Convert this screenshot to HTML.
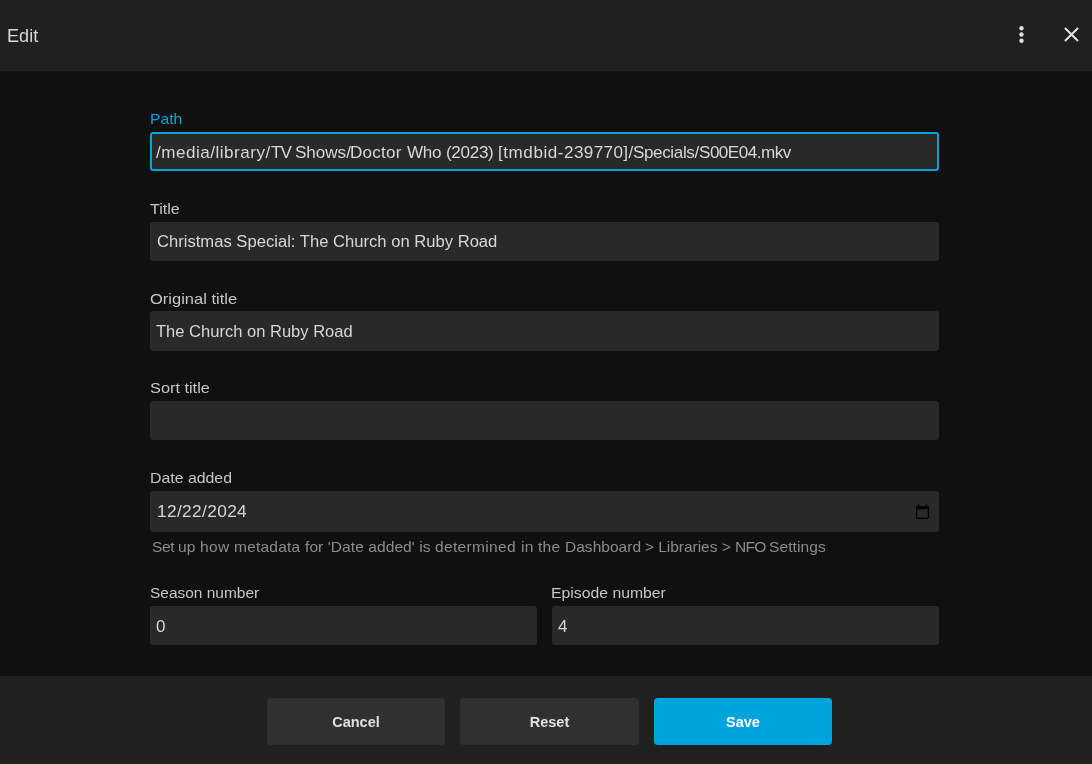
<!DOCTYPE html>
<html><head><meta charset="utf-8">
<style>
*{box-sizing:border-box;margin:0;padding:0}
html,body{width:1092px;height:764px;overflow:hidden;background:#101010;font-family:"Liberation Sans",sans-serif;color:#d6d6d6}
.hdr{position:absolute;left:0;top:0;width:1092px;height:71px;background:#202020}
.t{position:absolute;white-space:pre;line-height:20px;will-change:transform}
.edit{left:7px;top:26px;font-size:18.1px;color:#d8d8d8}
.lbl{font-size:16px;color:#c6c6c6}
.val{font-size:17px;color:#d6d6d6}
.box{position:absolute;background:#292929;border-radius:3px}
.focus{border:2px solid #00a4dc}
.help{font-size:15.7px;color:#8c8c8c}
.ftr{position:absolute;left:0;top:676px;width:1092px;height:88px;background:#202020}
.btn{position:absolute;will-change:transform;top:698px;height:47px;width:178px;border-radius:4px;background:#303030;color:#e0e0e0;font-weight:bold;font-size:14.5px;text-align:center;line-height:47px;padding-top:1px}
.save{background:#00a4dc;color:#fff}
svg{position:absolute}
</style></head><body>
<div class="hdr"></div>
<div class="t edit">Edit</div>
<svg style="left:1009px;top:22px" width="25" height="25" viewBox="0 0 24 24"><circle cx="12" cy="6" r="2.1" fill="#e0e0e0"/><circle cx="12" cy="12" r="2.1" fill="#e0e0e0"/><circle cx="12" cy="18" r="2.1" fill="#e0e0e0"/></svg>
<svg style="left:1059px;top:22px" width="25" height="25" viewBox="0 0 24 24"><path d="M19 6.41L17.59 5 12 10.59 6.41 5 5 6.41 10.59 12 5 17.59 6.41 19 12 13.41 17.59 19 19 17.59 13.41 12z" fill="#e0e0e0"/></svg>

<div class="t lbl" style="left:149.71px;top:109px;font-size:14.4px;transform:scaleX(1.0907);transform-origin:0 0;color:#00a4dc">Path</div>
<div class="box focus" style="left:150px;top:132px;width:789px;height:39px"></div>
<div class="t val" style="left:156.30px;top:143px;font-size:17.1px;letter-spacing:0.495px;">/media/library/</div>
<div class="t val" style="left:271.12px;top:143px;font-size:17.1px;letter-spacing:-1.065px;">TV </div>
<div class="t val" style="left:294.52px;top:143px;font-size:17.1px;letter-spacing:-0.034px;">Shows/</div>
<div class="t val" style="left:350.40px;top:143px;font-size:17.1px;letter-spacing:0.230px;">Doctor </div>
<div class="t val" style="left:407.12px;top:143px;font-size:17.1px;letter-spacing:-0.274px;">Who </div>
<div class="t val" style="left:445.94px;top:143px;font-size:17.1px;letter-spacing:-0.334px;">(2023) </div>
<div class="t val" style="left:497.78px;top:143px;font-size:17.1px;letter-spacing:0.536px;">[tmdbid-</div>
<div class="t val" style="left:563.84px;top:143px;font-size:17.1px;letter-spacing:0.378px;">239770]/</div>
<div class="t val" style="left:633.42px;top:143px;font-size:17.1px;letter-spacing:-0.398px;">Specials/</div>
<div class="t val" style="left:699.22px;top:143px;font-size:17.1px;letter-spacing:-0.524px;">S00E04.mkv</div>

<div class="t lbl" style="left:149.54px;top:199px;font-size:14.4px;transform:scaleX(1.1166);transform-origin:0 0;">Title</div>
<div class="box" style="left:150px;top:222px;width:789px;height:39px"></div>
<div class="t val" style="left:157px;top:232px;font-size:16.63px">Christmas Special: The Church on Ruby Road</div>

<div class="t lbl" style="left:149.82px;top:289px;font-size:14.4px;transform:scaleX(1.1458);transform-origin:0 0;">Original title</div>
<div class="box" style="left:150px;top:311px;width:789px;height:40px"></div>
<div class="t val" style="left:155.8px;top:322px;font-size:16.55px">The Church on Ruby Road</div>

<div class="t lbl" style="left:149.86px;top:378px;font-size:14.4px;transform:scaleX(1.1334);transform-origin:0 0;">Sort title</div>
<div class="box" style="left:150px;top:401px;width:789px;height:39px"></div>

<div class="t lbl" style="left:149.60px;top:468px;font-size:14.4px;transform:scaleX(1.1016);transform-origin:0 0;">Date added</div>
<div class="box" style="left:150px;top:491px;width:789px;height:41px"></div>
<div class="t val" style="left:157.4px;top:501px;font-size:17.3px;letter-spacing:0.36px">12/22/2024</div>
<svg style="left:915px;top:502.5px" width="15" height="17" viewBox="0 0 15 17"><path d="M3.6 1.2v2.4M11.5 1.2v2.4" stroke="#000" stroke-width="1.3"/><rect x="1.6" y="3.6" width="11.8" height="11.8" rx="1" fill="none" stroke="#000" stroke-width="1.2"/><rect x="1" y="3" width="13" height="3.3" rx="0.8" fill="#000"/></svg>
<div class="t help" style="left:151.89px;top:537px;font-size:14.4px;letter-spacing:-0.363px;transform:scaleX(1.0800);transform-origin:0 0;">Set </div>
<div class="t help" style="left:177.99px;top:537px;font-size:14.4px;letter-spacing:0.096px;transform:scaleX(1.0800);transform-origin:0 0;">up </div>
<div class="t help" style="left:199.92px;top:537px;font-size:14.4px;letter-spacing:0.369px;transform:scaleX(1.0800);transform-origin:0 0;">how </div>
<div class="t help" style="left:234.37px;top:537px;font-size:14.4px;letter-spacing:0.180px;transform:scaleX(1.0800);transform-origin:0 0;">metadata </div>
<div class="t help" style="left:305.28px;top:537px;font-size:14.4px;letter-spacing:0.063px;transform:scaleX(1.0800);transform-origin:0 0;">for &#x27;Date added&#x27; is </div>
<div class="t help" style="left:435.35px;top:537px;font-size:14.4px;letter-spacing:0.293px;transform:scaleX(1.0800);transform-origin:0 0;">determined </div>
<div class="t help" style="left:520.96px;top:537px;font-size:14.4px;letter-spacing:0.185px;transform:scaleX(1.0800);transform-origin:0 0;">in the </div>
<div class="t help" style="left:564.72px;top:537px;font-size:14.4px;letter-spacing:0.001px;transform:scaleX(1.0800);transform-origin:0 0;">Dashboard </div>
<div class="t help" style="left:645.13px;top:537px;font-size:14.4px;letter-spacing:-0.051px;transform:scaleX(1.0800);transform-origin:0 0;">&gt; Libraries </div>
<div class="t help" style="left:721.83px;top:537px;font-size:14.4px;letter-spacing:-0.283px;transform:scaleX(1.0800);transform-origin:0 0;">&gt; </div>
<div class="t help" style="left:734.62px;top:537px;font-size:14.4px;letter-spacing:-0.643px;transform:scaleX(1.0800);transform-origin:0 0;">NFO </div>
<div class="t help" style="left:768.99px;top:537px;font-size:14.4px;letter-spacing:0.076px;transform:scaleX(1.0800);transform-origin:0 0;">Settings</div>

<div class="t lbl" style="left:150.10px;top:583px;font-size:14.4px;transform:scaleX(1.0747);transform-origin:0 0;">Season number</div>
<div class="box" style="left:150px;top:606px;width:387px;height:39px"></div>
<div class="t val" style="left:156px;top:617px">0</div>

<div class="t lbl" style="left:551.31px;top:583px;font-size:14.4px;transform:scaleX(1.0962);transform-origin:0 0;">Episode number</div>
<div class="box" style="left:552px;top:606px;width:387px;height:39px"></div>
<div class="t val" style="left:557.5px;top:617px">4</div>

<div class="ftr"></div>
<div class="btn" style="left:267px">Cancel</div>
<div class="btn" style="left:460px;width:179px">Reset</div>
<div class="btn save" style="left:654px">Save</div>
</body></html>
